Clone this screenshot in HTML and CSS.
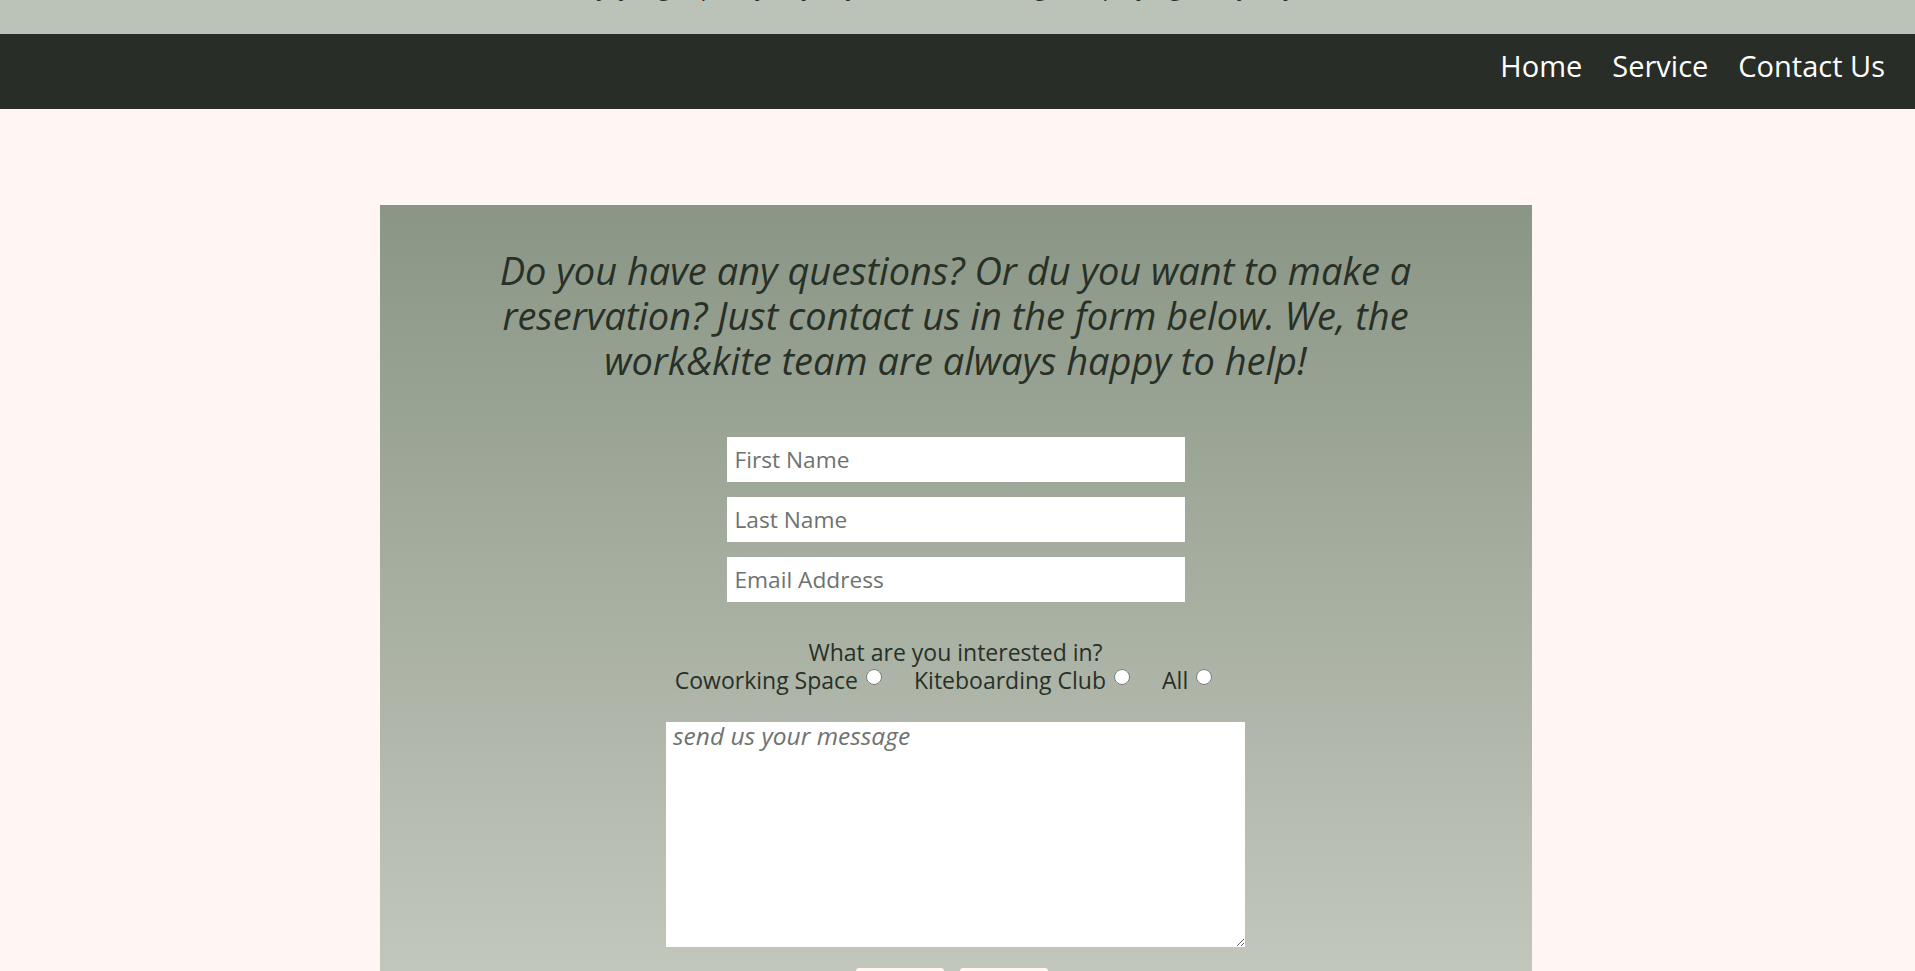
FILE: index.html
```html
<!DOCTYPE html>
<html lang="en">
<head>
<meta charset="utf-8">
<title>Contact Us – work&amp;kite</title>
<link rel="stylesheet" href="styles.css">
</head>
<body>
  <header class="top-band">
    <p class="top-text">enjoy high quality days by the sea, working and playing every day</p>
  </header>
  <nav class="navbar">
    <a href="#" class="nav-link">Home</a>
    <a href="#" class="nav-link">Service</a>
    <a href="#" class="nav-link">Contact Us</a>
  </nav>
  <main class="contact">
    <h2 class="contact-title">Do you have any questions? Or du you want to make a reservation? Just contact us in the form below. We, the work&amp;kite team are always happy to help!</h2>
    <form class="contact-form">
      <div class="fields">
        <input class="field" type="text" placeholder="First Name">
        <input class="field" type="text" placeholder="Last Name">
        <input class="field" type="email" placeholder="Email Address">
      </div>
      <div class="interest">
        <p class="interest-q">What are you interested in?</p>
        <div class="interest-options">
          <label class="opt">Coworking Space <input type="radio" name="interest"></label>
          <label class="opt">Kiteboarding Club <input type="radio" name="interest"></label>
          <label class="opt">All <input type="radio" name="interest"></label>
        </div>
      </div>
      <textarea class="message" placeholder="send us your message"></textarea>
      <div class="buttons">
        <button type="submit" class="btn">Send</button>
        <button type="reset" class="btn">Reset</button>
      </div>
    </form>
  </main>
</body>
</html>
```
FILE: styles.css
```css
html, body {
  margin: 0;
  padding: 0;
}
body {
  background: #fff5f2;
  font-family: "Open Sans", "Noto Sans", sans-serif;
  color: #283027;
  overflow: hidden;
}
.top-band {
  background: #bbc2b7;
  height: 34px;
  overflow: hidden;
  position: relative;
}
.top-text {
  margin: 0;
  position: absolute;
  left: 570px;
  top: -31px;
  font-size: 24px;
  line-height: 34px;
  color: #283027;
  white-space: nowrap;
}
.navbar {
  background: #282d27;
  height: 75px;
  box-sizing: border-box;
  padding: 12px 30px 0 0;
  display: flex;
  justify-content: flex-end;
  gap: 30px;
}
.nav-link {
  color: #ffffff;
  text-decoration: none;
  font-size: 29px;
  line-height: 39px;
}
.contact {
  width: 1152px;
  margin: 96px 0 0 calc(50% - 578px);
  min-height: 900px;
  padding-top: 43px;
  box-sizing: border-box;
  background: linear-gradient(to bottom, #8a9685 0px, #c2c7bc 766px, #dfe2da 1100px);
}
.contact-title {
  margin: 0 auto;
  max-width: 1060px;
  font-size: 38px;
  line-height: 45px;
  font-style: italic;
  font-weight: 400;
  text-align: center;
  color: #283027;
}
.contact-form {
  display: flex;
  flex-direction: column;
  align-items: center;
}
.fields {
  margin-top: 54px;
  display: flex;
  flex-direction: column;
  gap: 15px;
}
.field {
  width: 458px;
  height: 45px;
  box-sizing: border-box;
  border: none;
  padding: 0 8px;
  background: #ffffff;
  font-family: inherit;
  font-size: 22.7px;
  color: #283027;
}
.field::placeholder,
.message::placeholder {
  color: #6e7270;
}
.interest {
  margin-top: 36px;
  text-align: center;
  font-size: 23px;
  line-height: 28px;
}
.interest-q {
  margin: 0;
}
.interest-options {
  display: flex;
  justify-content: center;
  gap: 32px;
  padding-right: 24px;
}
.opt {
  display: inline-flex;
  align-items: center;
  gap: 2px;
}
.opt input {
  width: 16px;
  height: 16px;
  margin: 0 0 6px 6px;
}
.message {
  margin-top: 28px;
  width: 579px;
  height: 225px;
  box-sizing: border-box;
  border: none;
  padding: 0 7px;
  background: #ffffff;
  font-family: inherit;
  font-size: 24.5px;
  line-height: 28px;
  font-style: italic;
  color: #283027;
}
.buttons {
  margin-top: 21px;
  display: flex;
  gap: 16px;
  padding-right: 8px;
}
.btn {
  width: 88px;
  height: 40px;
  border: none;
  border-radius: 3px;
  background: #fff5f2;
  font-family: inherit;
  font-size: 18px;
  color: #283027;
}
```
